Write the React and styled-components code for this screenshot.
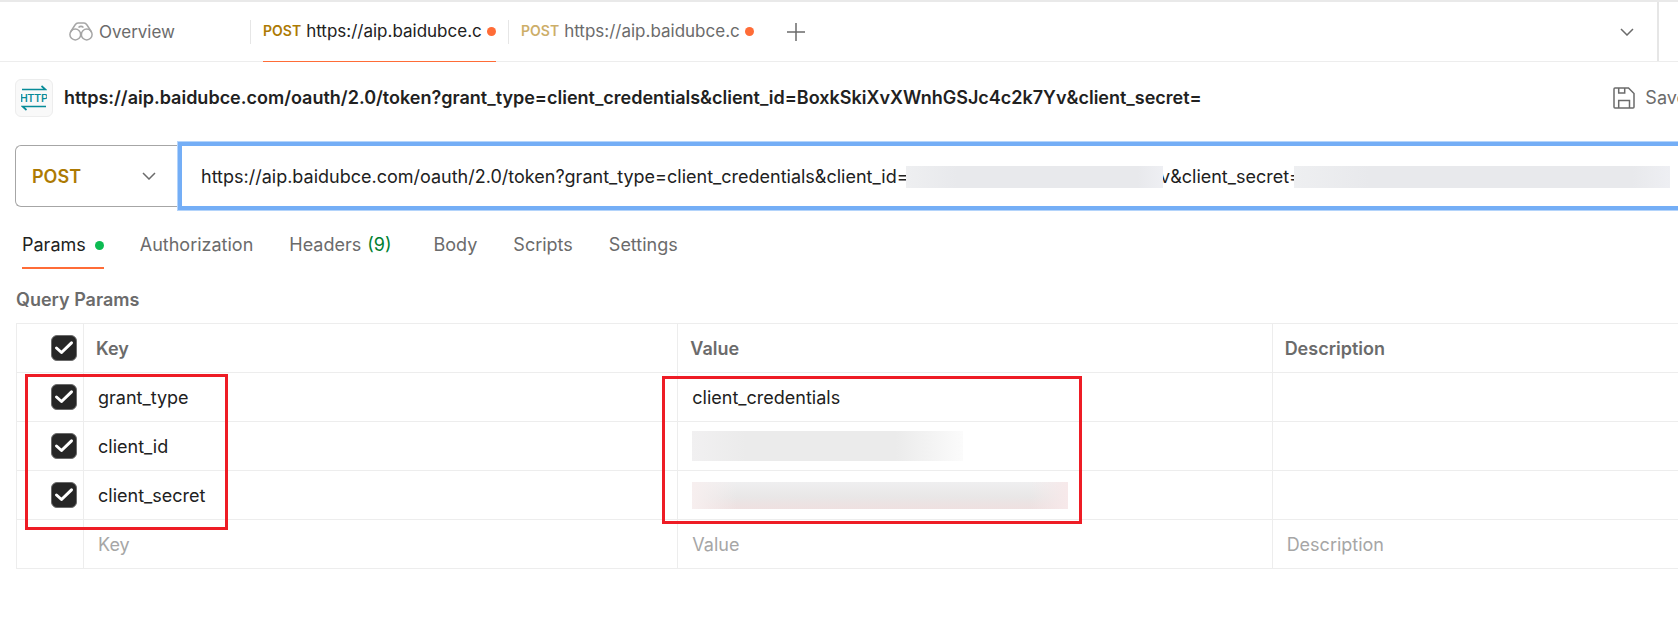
import { useState } from "react";
import styled, { createGlobalStyle } from "styled-components";

const GlobalStyle = createGlobalStyle`
  * {
    box-sizing: border-box;
  }

  body {
    margin: 0;
    background: #ffffff;
    color: #212121;
    font-family: Inter, "Liberation Sans", sans-serif;
    font-size: 18px;
    line-height: 24px;
    overflow-x: hidden;
  }

  button, input, select {
    margin: 0;
    padding: 0;
    border: none;
    background: none;
    color: inherit;
    font: inherit;
  }
`;

const Page = styled.div`
  overflow: hidden;
  border-top: 2px solid #e9e9e9;
`;

const TabBar = styled.nav`
  display: flex;
  align-items: stretch;
  height: 60px;
  border-bottom: 1px solid #ededed;
`;

const Tab = styled.button`
  flex: none;
  display: flex;
  align-items: center;
  width: ${(props) => (props.$overview ? "250px" : "258px")};
  height: 60px;
  padding: ${(props) => (props.$overview ? "0 12px 1px 69px" : "0 12px 0 0")};
  gap: 6px;
  color: ${(props) => (props.$active ? "#212121" : "#6b6b6b")};
  font-size: 17px;
  text-align: left;
`;

const Separator = styled.span`
  width: 1px;
  height: 24px;
  margin-right: 6px;
  background: #e6e6e6;
`;

const TabBody = styled.span`
  flex: 1;
  min-width: 0;
  display: flex;
  align-items: center;
  gap: 5px;
  height: 60px;
  padding-bottom: 1px;
  border-bottom: 1px solid ${(props) => (props.$active ? "#ff6c37" : "transparent")};
`;

const TabMethod = styled.span`
  font-size: 14px;
  font-weight: 600;
  color: #ad7a03;
  opacity: ${(props) => (props.$active ? 1 : 0.6)};
`;

const TabUrl = styled.span`
  flex: 1;
  overflow: hidden;
  white-space: nowrap;
`;

const Dot = styled.span`
  flex: none;
  width: 9px;
  height: 9px;
  border-radius: 50%;
  background: #ff6c37;
`;

const ParamsDot = styled(Dot)`
  margin-left: 3px;
  background: #0cbb52;
`;

const IconButton = styled.button`
  display: flex;
  align-items: center;
  justify-content: center;
  width: 24px;
  height: 60px;
`;

const AddTab = styled(IconButton)`
  margin-left: 18px;
`;

const TabMenu = styled(IconButton)`
  margin: 0 18px 0 auto;
`;

const TabBarEnd = styled.div`
  width: 21px;
  border-left: 2px solid #e6e6e6;
`;

const TitleRow = styled.header`
  display: flex;
  align-items: center;
  height: 38px;
  margin: 17px -9px 0 15px;
`;

const HttpBadge = styled.span`
  display: flex;
  align-items: center;
  justify-content: center;
  width: 38px;
  height: 38px;
  margin-right: 11px;
  border: 1px solid #ededed;
  border-radius: 6px;
  background: #f9f9f9;
`;

const Title = styled.h1`
  flex: 1;
  margin: 0;
  font-size: 18px;
  font-weight: 600;
  white-space: nowrap;
`;

const SaveButton = styled.button`
  display: flex;
  align-items: center;
  gap: 10px;
  color: #6b6b6b;
`;

const RequestRow = styled.form`
  display: flex;
  align-items: center;
  margin: 24px -1px 0 15px;
`;

const MethodBox = styled.label`
  display: grid;
  grid-template-columns: 1fr 35px;
  align-items: center;
  width: 162px;
  height: 62px;
  border: 1px solid #a6a6a6;
  border-right: none;
  border-radius: 6px 0 0 6px;
`;

const MethodSelect = styled.select`
  grid-area: 1 / 1 / 2 / 3;
  height: 60px;
  padding: 2px 0 0 16px;
  appearance: none;
  outline: none;
  font-weight: 600;
  color: #ad7a03;
`;

const MethodChevron = styled.span`
  grid-area: 1 / 2;
  display: flex;
  pointer-events: none;
`;

const UrlBox = styled.div`
  flex: 1;
  position: relative;
  height: 70px;
  border: 5px solid #74aef6;
  border-right: none;
  outline: 1px solid #b4d4fb;
  outline-offset: -1px;
`;

const UrlInput = styled.input`
  width: 100%;
  height: 100%;
  padding-left: 19px;
  outline: none;
`;

const UrlMask = styled.span`
  position: absolute;
  top: 20px;
  left: ${(props) => props.$left}px;
  width: ${(props) => props.$width}px;
  height: 22px;
  background: linear-gradient(90deg, #eeeff1, #e8e9ec 20%, #e8e9ec 90%, #eeeff3);
`;

const RequestTabs = styled.nav`
  display: flex;
  gap: 36px;
  margin: 22px 0 0 22px;
`;

const RequestTab = styled.button`
  display: flex;
  align-items: center;
  gap: 6px;
  height: 36px;
  padding-bottom: 10px;
  border-bottom: 2px solid ${(props) => (props.$active ? "#ff6c37" : "transparent")};
  color: ${(props) => (props.$active ? "#212121" : "#6b6b6b")};
`;

const Count = styled.span`
  padding-right: 6px;
  color: #007f31;
`;

const SectionTitle = styled.h2`
  margin: 19px 0 11px 16px;
  font-size: 18px;
  font-weight: 600;
  color: #6b6b6b;
`;

const TableArea = styled.section`
  position: relative;
  margin-left: 16px;
`;

const ParamsTable = styled.table`
  width: 100%;
  table-layout: fixed;
  border-collapse: collapse;

  tr {
    height: 49px;
  }

  th, td {
    padding: 0 0 0 14px;
    border: 1px solid #ededed;
    border-right: none;
  }

  th {
    padding: 2px 0 0 12px;
    text-align: left;
    font-weight: 600;
    color: #6b6b6b;
  }
`;

const CheckCol = styled.col`
  width: 67px;
`;

const WideCol = styled.col`
  width: 35.77%;
`;

const CheckLabel = styled.label`
  display: grid;
  justify-content: end;
  padding-right: 6px;

  > * {
    grid-area: 1 / 1;
  }
`;

const CheckInput = styled.input`
  width: 26px;
  height: 26px;
  appearance: none;
  border-radius: 6px;
  border: 1px solid #6b6b6b;

  &:checked {
    background: #262626;
  }
`;

const CellInput = styled.input`
  display: block;
  width: 100%;
  padding-top: 2px;
  outline: none;

  &::placeholder {
    color: #a6a6a6;
    opacity: 1;
  }
`;

const ValueMask = styled.span`
  display: block;
  width: ${(props) => (props.$pink ? "376px" : "271px")};
  height: ${(props) => (props.$pink ? "27px" : "30px")};
  background: ${(props) =>
    props.$pink
      ? "linear-gradient(90deg, #f7efef, transparent 12%, transparent 90%, #f7e9ea), linear-gradient(#efeff0, #e9e7e7 55%, #efe0e0)"
      : "linear-gradient(90deg, #f1f0f1, #ebebeb 20%, #ebebeb 75%, #fbfbfb)"};
`;

const Highlight = styled.div`
  position: absolute;
  top: ${(props) => props.$top}px;
  left: ${(props) => props.$left}px;
  width: ${(props) => props.$width}px;
  height: ${(props) => props.$height}px;
  border: 3px solid #ee1c25;
  pointer-events: none;
`;

const requestTabs = ["Params", "Authorization", "Headers", "Body", "Scripts", "Settings"];

const params = [
  { key: "grant_type", value: "client_credentials" },
  { key: "client_id" },
  { key: "client_secret", pink: true },
];

const BinocularsIcon = () => (
  <svg width="24" height="19" viewBox="0 0 24 19" fill="none" stroke="#a6a6a6" strokeWidth="1.5">
    <circle cx="6.3" cy="12.5" r="5.4" />
    <circle cx="17.7" cy="12.5" r="5.4" />
    <path d="M1.5 10L6 3Q7.3 1 9 1H15Q16.7 1 18 3L22.5 10" />
    <path d="M9.5 5.5Q12 3.2 14.5 5.5" />
    <path d="M11 12.5Q12 11.3 13 12.5" />
  </svg>
);

const HttpIcon = () => (
  <svg width="26" height="26" viewBox="0 0 26 26" fill="none" stroke="#078b98" strokeWidth="1.7">
    <path d="M1 4.5H24.5L20.5 1" />
    <path d="M25 21.5H1.5L5.5 25" />
    <text
      x="13"
      y="17"
      textAnchor="middle"
      fill="#078b98"
      stroke="none"
      fontFamily="Roboto, sans-serif"
      fontSize="11"
      fontWeight="500"
    >
      HTTP
    </text>
  </svg>
);

const SaveIcon = () => (
  <svg width="22" height="22" viewBox="0 0 22 22" fill="none" stroke="#6b6b6b" strokeWidth="1.5">
    <path d="M1 2Q1 1 2 1H15.5L21 6.5V20Q21 21 20 21H2Q1 21 1 20Z" />
    <path d="M5.7 1V6H11.7V1" />
    <path d="M5.7 21V13.5H16.5V21" />
  </svg>
);

const ChevronIcon = () => (
  <svg width="14" height="8" viewBox="0 0 14 8" fill="none" stroke="#6b6b6b" strokeWidth="1.5">
    <path d="M1 1L7 7L13 1" />
  </svg>
);

const PlusIcon = () => (
  <svg width="18" height="18" viewBox="0 0 18 18" stroke="#6b6b6b" strokeWidth="1.5">
    <path d="M9 0V18M0 9H18" />
  </svg>
);

const CheckIcon = () => (
  <svg width="26" height="26" viewBox="0 0 26 26" fill="none" stroke="#ffffff" strokeWidth="3">
    <path d="M5.5 13L10.5 17.5L20.5 7.8" strokeLinecap="round" strokeLinejoin="round" />
  </svg>
);

function Checkbox({ label }) {
  const [checked, setChecked] = useState(true);

  return (
    <CheckLabel>
      <CheckInput
        type="checkbox"
        aria-label={label}
        checked={checked}
        onChange={() => setChecked(!checked)}
      />
      <CheckIcon />
    </CheckLabel>
  );
}

function RequestFileTab({ active }) {
  return (
    <Tab $active={active}>
      <Separator />
      <TabBody $active={active}>
        <TabMethod $active={active}>POST</TabMethod>
        <TabUrl>https://aip.baidubce.com</TabUrl>
        <Dot />
      </TabBody>
    </Tab>
  );
}

function App() {
  return (
    <Page>
      <GlobalStyle />
      <TabBar>
        <Tab $overview>
          <BinocularsIcon />
          Overview
        </Tab>
        <RequestFileTab active />
        <RequestFileTab />
        <AddTab aria-label="New tab">
          <PlusIcon />
        </AddTab>
        <TabMenu aria-label="All tabs">
          <ChevronIcon />
        </TabMenu>
        <TabBarEnd />
      </TabBar>

      <TitleRow>
        <HttpBadge>
          <HttpIcon />
        </HttpBadge>
        <Title>
          https://aip.baidubce.com/oauth/2.0/token?grant_type=client_credentials&amp;client_id=BoxkSkiXvXWnhGSJc4c2k7Yv&amp;client_secret=
        </Title>
        <SaveButton>
          <SaveIcon />
          Save
        </SaveButton>
      </TitleRow>

      <RequestRow>
        <MethodBox>
          <MethodSelect aria-label="Method" defaultValue="POST">
            <option>GET</option>
            <option>POST</option>
          </MethodSelect>
          <MethodChevron>
            <ChevronIcon />
          </MethodChevron>
        </MethodBox>
        <UrlBox>
          <UrlInput
            aria-label="Request URL"
            defaultValue="https://aip.baidubce.com/oauth/2.0/token?grant_type=client_credentials&client_id=BoxkSkiXvXWnhGSJc4c2k7Yv&client_secret="
          />
          <UrlMask $left={724} $width={257} />
          <UrlMask $left={1112} $width={376} />
        </UrlBox>
      </RequestRow>

      <RequestTabs>
        {requestTabs.map((name) => (
          <RequestTab key={name} $active={name === "Params"}>
            {name}
            {name === "Params" && <ParamsDot />}
            {name === "Headers" && <Count>(9)</Count>}
          </RequestTab>
        ))}
      </RequestTabs>

      <SectionTitle>Query Params</SectionTitle>
      <TableArea>
        <ParamsTable>
          <colgroup>
            <CheckCol />
            <WideCol />
            <WideCol />
            <col />
          </colgroup>
          <thead>
            <tr>
              <td>
                <Checkbox label="Select all" />
              </td>
              <th>Key</th>
              <th>Value</th>
              <th>Description</th>
            </tr>
          </thead>
          <tbody>
            {params.map(({ key, value, pink }) => (
              <tr key={key}>
                <td>
                  <Checkbox label={key} />
                </td>
                <td>
                  <CellInput aria-label="Key" defaultValue={key} />
                </td>
                <td>
                  {value ? (
                    <CellInput aria-label="Value" defaultValue={value} />
                  ) : (
                    <ValueMask $pink={pink} />
                  )}
                </td>
                <td>
                  <CellInput aria-label="Description" />
                </td>
              </tr>
            ))}
            <tr>
              <td />
              <td>
                <CellInput aria-label="Key" placeholder="Key" />
              </td>
              <td>
                <CellInput aria-label="Value" placeholder="Value" />
              </td>
              <td>
                <CellInput aria-label="Description" placeholder="Description" />
              </td>
            </tr>
          </tbody>
        </ParamsTable>
        <Highlight $top={51} $left={9} $width={203} $height={156} />
        <Highlight $top={53} $left={646} $width={420} $height={148} />
      </TableArea>
    </Page>
  );
}

export default App;
